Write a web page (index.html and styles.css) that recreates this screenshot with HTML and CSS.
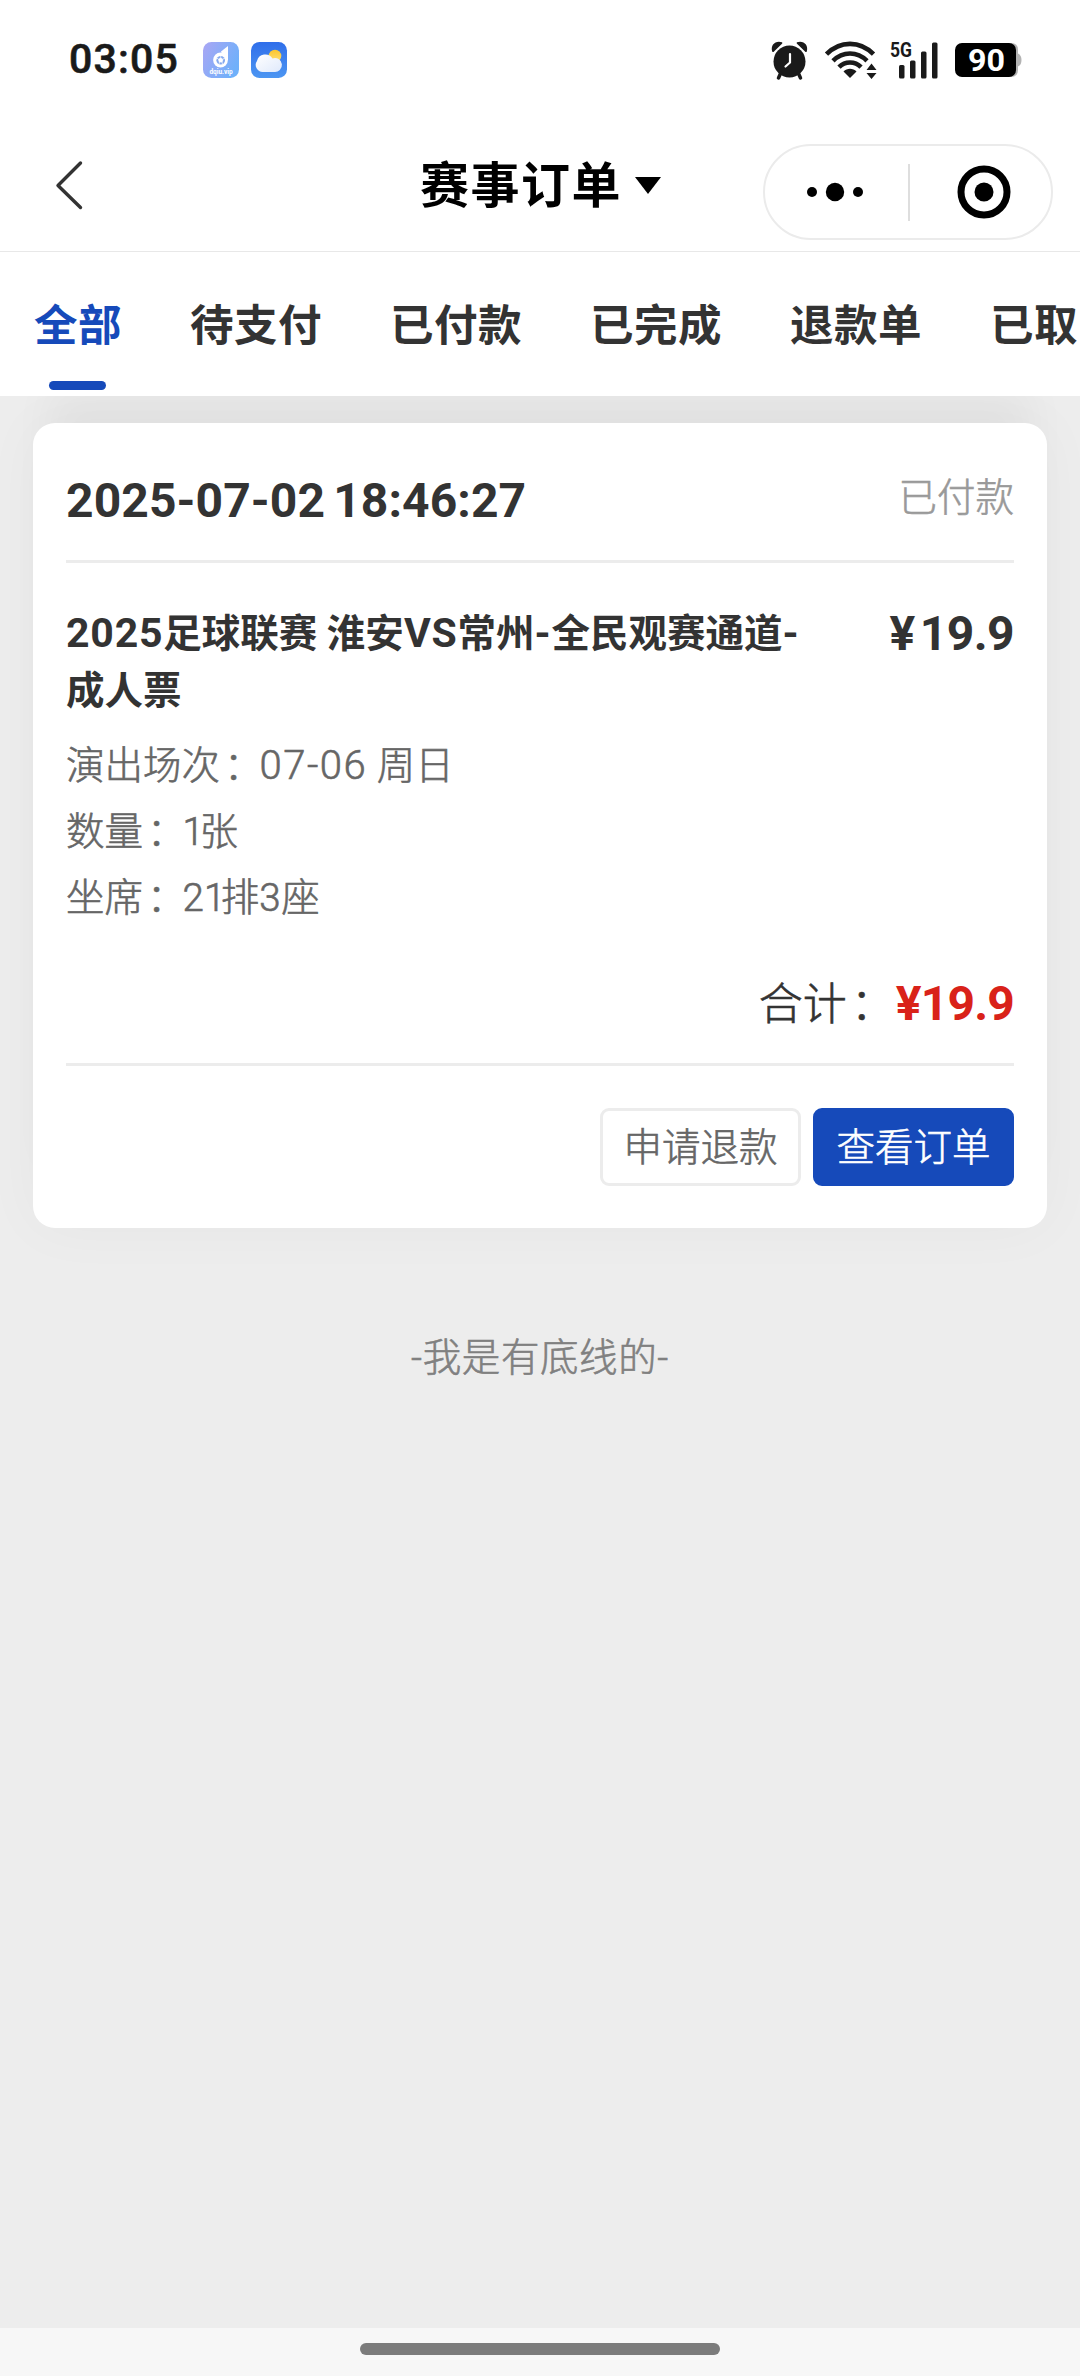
FILE: index.html
```html
<!DOCTYPE html>
<html lang="zh-CN">
<head>
<meta charset="utf-8">
<title>赛事订单</title>
<link rel="stylesheet" href="styles.css">
</head>
<body>
<div class="screen">
  <header class="statusbar">
    <span class="clock">03:05</span>
    <svg class="app-icon" width="36" height="36" viewBox="0 0 36 36">
      <defs><linearGradient id="violet" x1="0" y1="0" x2="1" y2="0.5"><stop offset="0" stop-color="#aaa6f4"/><stop offset="1" stop-color="#6fb0fa"/></linearGradient></defs>
      <rect width="36" height="36" rx="8.500" fill="url(#violet)"/>
      <path d="M18 9.500L25 4v14h-3.500z" fill="#fff"/>
      <circle cx="17.500" cy="18" r="7.400" fill="#fff"/>
      <circle cx="17.700" cy="18.200" r="4.300" fill="#84a9ee"/>
      <path d="M17.700 15.800l2.200 1.600-.8 2.600h-2.800l-.8-2.600zM13.500 16l2 1M22 16l-2 1M16 22l.5-2M19.500 22l-.5-2M17.700 13.500v2" fill="#fff" stroke="#fff" stroke-width=".7"/>
      <text x="18" y="32" class="app-label">dqiu.vip</text>
    </svg>
    <svg class="app-icon weather" width="36" height="36" viewBox="0 0 36 36">
      <defs>
        <linearGradient id="sky" x1="0" y1="0" x2="0" y2="1"><stop offset="0" stop-color="#2f6eea"/><stop offset="1" stop-color="#4c96f2"/></linearGradient>
        <linearGradient id="sun" x1="0" y1="0" x2="0" y2="1"><stop offset="0" stop-color="#fbc52c"/><stop offset="1" stop-color="#ffe27a"/></linearGradient>
        <linearGradient id="cloud" x1="0" y1="0" x2="1" y2="1"><stop offset="0" stop-color="#fff"/><stop offset="1" stop-color="#dfe9fb"/></linearGradient>
      </defs>
      <rect width="36" height="36" rx="8.500" fill="url(#sky)"/>
      <circle cx="24" cy="14" r="6.300" fill="url(#sun)"/>
      <path d="M12 30a7 7 0 0 1-6-11A8.500 8.500 0 0 1 21.500 16.500 7 7 0 1 1 23 30z" fill="url(#cloud)"/>
    </svg>
    <span class="spacer"></span>
    <svg class="alarm" width="37" height="39" viewBox="0 0 37 39">
      <g fill="#1a1a1a">
        <path d="M1.200 10.500C-.8 4 4.500-1 11 1.200a1 1 0 0 1 0 1.500L3 10.500a1.200 1.200 0 0 1-1.800 0z"/>
        <path d="M35.800 10.500C37.800 4 32.500-1 26 1.200a1 1 0 0 0 0 1.500l8 7.800a1.200 1.200 0 0 0 1.800 0z"/>
        <circle cx="18.500" cy="20.500" r="16"/>
      </g>
      <path d="M9.500 32.500l-2 4.500M27.500 32.500l2 4.500" stroke="#1a1a1a" stroke-width="3.500" stroke-linecap="round"/>
      <path d="M19 13v8.500l-4.500 4" fill="none" stroke="#fff" stroke-width="2.200" stroke-linecap="round" stroke-linejoin="round"/>
    </svg>
    <svg class="wifi" width="52" height="38" viewBox="0 0 52 38">
      <g fill="none" stroke="#1a1a1a" stroke-width="4.600">
        <path d="M1.500 13.200C15-.6 35-.6 48.500 13.200"/>
        <path d="M8 19.800c9.800-9.800 24.200-9.800 34 0"/>
        <path d="M14 26.200c6-6.200 16-6.200 22 0"/>
      </g>
      <path d="M18.500 30.500c3.500-3.700 9.500-3.700 13 0L25 37z" fill="#1a1a1a"/>
      <path d="M46.500 22.500l5 6.500h-10zM46.500 38l5-6h-10z" fill="#1a1a1a"/>
    </svg>
    <svg class="signal" width="48" height="38" viewBox="0 0 48 38">
      <text x="0" y="16" class="net-label" textLength="22" lengthAdjust="spacingAndGlyphs">5G</text>
      <g fill="#1a1a1a">
        <rect x="9" y="24" width="5.500" height="13.500" rx="1.500"/>
        <rect x="20" y="19.500" width="5.500" height="18" rx="1.500"/>
        <rect x="31" y="10.500" width="5.500" height="27" rx="1.500"/>
        <rect x="42" y="1.500" width="5.500" height="36" rx="1.500"/>
      </g>
    </svg>
    <svg class="battery" width="67" height="34" viewBox="0 0 67 34">
      <path d="M50 0h6q7 0 7 7v3.500q3.500 1.500 3.500 6.500t-3.500 6.500V27q0 7-7 7h-6z" fill="#b3b3b3"/>
      <rect width="61" height="34" rx="7" fill="#000"/>
      <text x="31.500" y="28" class="battery-label" textLength="37" lengthAdjust="spacingAndGlyphs">90</text>
    </svg>
  </header>

  <nav class="navbar">
    <svg class="back" width="30" height="50" viewBox="0 0 30 50"><path d="M26.500 3L4 25.500 26.500 47.500" fill="none" stroke="#333" stroke-width="3.400" stroke-linecap="round" stroke-linejoin="round"/></svg>
    <h1 class="nav-title"><span>赛事订单</span><svg class="caret" width="26" height="17" viewBox="0 0 26 17"><path d="M0 0h26L13 17z"/></svg></h1>
    <div class="capsule">
      <svg class="more" width="58" height="20" viewBox="0 0 58 20"><circle cx="6" cy="10" r="5"/><circle cx="29" cy="10" r="9.200"/><circle cx="52" cy="10" r="5"/></svg>
      <span class="capsule-line"></span>
      <svg class="close" width="54" height="54" viewBox="0 0 54 54"><circle cx="27" cy="27" r="23" fill="none" stroke="#000" stroke-width="7"/><circle cx="27" cy="27" r="9.500"/></svg>
    </div>
  </nav>

  <div class="tabs">
    <span class="tab active">全部</span>
    <span class="tab">待支付</span>
    <span class="tab">已付款</span>
    <span class="tab">已完成</span>
    <span class="tab">退款单</span>
    <span class="tab">已取</span>
  </div>

  <main class="list">
    <article class="card">
      <div class="card-head">
        <span class="date">2025-07-02 18:46:27</span>
        <span class="state">已付款</span>
      </div>
      <div class="card-body">
        <div class="item">
          <h2 class="item-title"><span class="latin">2025</span>足球联赛 淮安<span class="latin">VS</span>常州<span class="latin">-</span>全民观赛通道<span class="latin">-</span>成人票</h2>
          <span class="price">¥ 19.9</span>
        </div>
        <p class="detail">演出场次<span class="colon">：</span><span class="latin">07-06</span> 周日</p>
        <p class="detail">数量<span class="colon">：</span><span class="one">1</span>张</p>
        <p class="detail">坐席<span class="colon">：</span>2<span class="one">1</span>排<span class="three">3</span>座</p>
        <div class="total"><span class="total-label">合计<span class="colon">：</span></span><span class="total-price">¥19.9</span></div>
      </div>
      <div class="actions">
        <button class="btn">申请退款</button>
        <button class="btn primary">查看订单</button>
      </div>
    </article>
    <p class="end">-我是有底线的-</p>
  </main>

  <footer class="homebar"><span class="pill"></span></footer>
</div>
</body>
</html>
```
FILE: styles.css
```css
* { box-sizing: border-box; margin: 0; padding: 0; }
body {
  background: #ededed;
  color: #333;
  font-family: Roboto, "Noto Sans CJK SC", sans-serif;
}
svg { display: block; flex: none; overflow: visible; }
.screen {
  width: 1080px;
  height: 2376px;
  display: flex;
  flex-direction: column;
  overflow: hidden;
}

.statusbar {
  height: 120px;
  display: flex;
  align-items: center;
  padding: 0 58px 0 69px;
  background: #fff;
}
.clock {
  width: 134px;
  font-size: 41px;
  font-weight: 500;
  letter-spacing: 1.2px;
  color: #1a1a1a;
  line-height: 48px;
  margin-top: -2px;
  -webkit-text-stroke: 0.6px #1a1a1a;
}
.weather { margin-left: 12px; }
.spacer { flex: 1; }
.app-label { font: 700 6.500px Roboto, sans-serif; fill: #fff; text-anchor: middle; }
.wifi { margin-left: 17px; }
.signal { margin-left: 13px; }
.battery { margin-left: 17px; }
.net-label { font: 700 21px Roboto, sans-serif; fill: #1a1a1a; }
.battery-label { font: 700 31px Roboto, sans-serif; fill: #fff; text-anchor: middle; }

.navbar {
  height: 132px;
  display: grid;
  grid-template-columns: 366px 1fr 290px;
  align-items: start;
  padding: 0 27px 0 54px;
  background: #fff;
  border-bottom: 1px solid #e8e8e8;
}
.back { margin-top: 40px; }
.nav-title {
  display: flex;
  align-items: flex-start;
  margin-top: 37px;
  font-size: 49px;
  line-height: 60px;
  letter-spacing: 1.5px;
  color: #000;
}
.caret { margin: 20px 0 0 13px; }
.capsule {
  display: flex;
  align-items: center;
  width: 290px;
  height: 96px;
  margin-top: 24px;
  padding-left: 41px;
  border: 2px solid #ebebeb;
  border-radius: 48px;
}
.capsule-line { width: 2px; height: 57px; margin: 0 47px 0 44px; background: #dedede; }

.tabs {
  height: 144px;
  flex: none;
  display: flex;
  gap: 68px;
  padding-left: 34px;
  background: #fff;
  font-size: 43.500px;
  font-weight: 700;
  letter-spacing: 0.5px;
  white-space: nowrap;
}
.tab {
  flex: none;
  display: flex;
  flex-direction: column;
  align-items: center;
  padding-top: 43px;
  line-height: 64px;
}
.active { color: #164aba; }
.active::after {
  content: "";
  width: 57px;
  height: 9px;
  margin: 22px 2px 0 0;
  border-radius: 5px;
  background: #164aba;
}

.list {
  flex: 1;
  overflow: hidden;
  padding: 27px 33px 0;
}
.card {
  height: 805px;
  padding: 0 33px;
  background: #fff;
  border-radius: 22px;
  box-shadow: 0 0 60px rgba(0, 0, 0, 0.035), 0 -50px 40px -14px rgba(0, 0, 0, 0.035);
}
.card-head {
  height: 140px;
  display: flex;
  justify-content: space-between;
  border-bottom: 3px solid #ececec;
}
.date { font-size: 48px; font-weight: 700; line-height: 56px; margin-top: 50px; letter-spacing: 0.1px; word-spacing: -4px; }
.state, .detail, .total-label, .btn, .end {
  font-weight: 300;
  -webkit-text-stroke: 0.6px currentColor;
}
.state { font-size: 38.500px; line-height: 56px; margin-top: 47px; color: #999; }
.card-body { height: 503px; padding-top: 42px; border-bottom: 3px solid #ececec; }
.item { display: flex; justify-content: space-between; margin-bottom: 14px; }
.item-title { width: 750px; font-size: 38.500px; line-height: 57px; }
.latin { font-size: 41px; line-height: 1; letter-spacing: 0.800px; }
.detail .latin { font-size: 40px; letter-spacing: 1.500px; }
.one { letter-spacing: -4.500px; }
.three { letter-spacing: 0.500px; }
.colon { padding-left: 4px; margin-right: -3px; }
.price { font-size: 48px; font-weight: 700; line-height: 60px; margin-top: -1px; letter-spacing: -0.600px; word-spacing: -6px; }
.detail { font-size: 38.500px; line-height: 66px; color: #666; }
.total { display: flex; justify-content: flex-end; margin-top: 40px; line-height: 66px; white-space: nowrap; }
.total-label { font-size: 44px; margin-top: 1px; }
.total-price { font-size: 48px; font-weight: 700; letter-spacing: -0.800px; margin-left: 4px; color: #d92219; }
.actions { display: flex; justify-content: flex-end; gap: 12px; padding-top: 42px; }
.btn {
  width: 201px;
  height: 78px;
  border: 3px solid #ececec;
  border-radius: 9px;
  background: #fff;
  font-family: inherit;
  font-size: 38.500px;
  line-height: 70px;
  padding-top: 2px;
  color: #666;
}
.primary { border-color: #164aba; background: #164aba; color: #fff; }
.end { margin-top: 101px; font-size: 38.500px; line-height: 58px; letter-spacing: 0.600px; text-align: center; color: #808080; }

.homebar { height: 48px; flex: none; padding-top: 15px; background: #f7f7f7; }
.pill { display: block; width: 360px; height: 12px; margin: 0 auto; border-radius: 6px; background: #7b7b7b; }
```
